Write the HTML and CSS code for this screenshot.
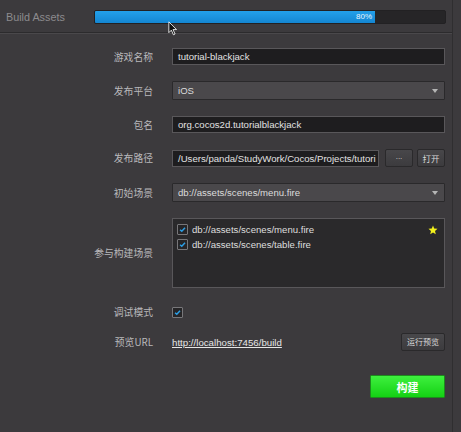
FILE: index.html
```html
<!DOCTYPE html>
<html>
<head>
<meta charset="utf-8">
<link rel="stylesheet" href="styles.css">
</head>
<body>
<div class="window">
  <div class="topbar">
    <div class="title">Build Assets</div>
    <div class="progress">
      <div class="fill" style="width:80%"><span class="pct">80%</span></div>
    </div>
  </div>
  <div class="form">
    <div class="label">游戏名称</div>
    <div class="field"><div class="input">tutorial-blackjack</div></div>

    <div class="label">发布平台</div>
    <div class="field"><div class="select">iOS<span class="arrow"></span></div></div>

    <div class="label">包名</div>
    <div class="field"><div class="input">org.cocos2d.tutorialblackjack</div></div>

    <div class="label">发布路径</div>
    <div class="field path">
      <div class="input grow">/Users/panda/StudyWork/Cocos/Projects/tutori</div>
      <div class="btn small dots">...</div>
      <div class="btn small">打开</div>
    </div>

    <div class="label">初始场景</div>
    <div class="field"><div class="select">db://assets/scenes/menu.fire<span class="arrow"></span></div></div>

    <div class="label">参与构建场景</div>
    <div class="field">
      <div class="scenes">
        <div class="scene"><span class="cb"><svg viewBox="0 0 10 10"><path d="M2.3 5.2 L4.2 7 L7.8 3" fill="none" stroke="#2c9fe6" stroke-width="1.6"/></svg></span><span class="sname">db://assets/scenes/menu.fire</span>
          <svg class="star" viewBox="0 0 10 10"><path d="M5 0.5 L6.2 3.6 L9.5 3.8 L7 5.9 L7.8 9.2 L5 7.4 L2.2 9.2 L3 5.9 L0.5 3.8 L3.8 3.6 Z" fill="#f2f01c"/></svg>
        </div>
        <div class="scene"><span class="cb"><svg viewBox="0 0 10 10"><path d="M2.3 5.2 L4.2 7 L7.8 3" fill="none" stroke="#2c9fe6" stroke-width="1.6"/></svg></span><span class="sname">db://assets/scenes/table.fire</span></div>
      </div>
    </div>

    <div class="label debug">调试模式</div>
    <div class="field debug"><span class="cb"><svg viewBox="0 0 10 10"><path d="M2.3 5.2 L4.2 7 L7.8 3" fill="none" stroke="#2c9fe6" stroke-width="1.6"/></svg></span></div>

    <div class="label url">预览URL</div>
    <div class="field url">
      <span class="link">http://localhost:7456/build</span>
      <div class="btn run">运行预览</div>
    </div>

    <div class="label"></div>
    <div class="field buildrow"><div class="build">构建</div></div>
  </div>
  <svg class="cursor" viewBox="0 0 12 18"><path d="M1 1 L1 14 L4 11 L6.5 16.5 L8.5 15.6 L6 10.3 L10.2 10.3 Z" fill="#111" stroke="#fff" stroke-width="1"/></svg>
</div>
</body>
</html>
```

FILE: styles.css
```css
html, body {
  margin: 0;
  padding: 0;
  background: #3c3a3d;
}
body {
  font-family: "Liberation Sans", "Noto Sans CJK SC", Arial, sans-serif;
  color: #d8d8d8;
  width: 461px;
  height: 432px;
  overflow: hidden;
}
.window {
  position: relative;
  width: 452px;
  height: 432px;
  border-right: 1px solid #2f2e30;
}
.topbar {
  height: 33px;
  display: flex;
  align-items: center;
  border-bottom: 1px solid #2c2b2d;
  box-shadow: 0 1px 0 #4a484b;
  box-sizing: border-box;
  padding-top: 1px;
}
.title {
  width: 88px;
  padding-left: 6px;
  font-size: 10.8px;
  color: #8c8b8e;
}
.progress {
  width: 350px;
  height: 12px;
  background: #262527;
  border: 1px solid #222123;
  border-radius: 2px;
  overflow: hidden;
}
.fill {
  height: 100%;
  background: linear-gradient(#23a0ea, #1486d2);
  display: flex;
  justify-content: flex-end;
  align-items: center;
}
.pct {
  font-size: 8px;
  color: #e9f3fb;
  padding-right: 3px;
}
.form {
  display: grid;
  grid-template-columns: 153px 273px;
  column-gap: 19px;
  row-gap: 16px;
  padding-top: 15px;
  align-items: center;
}
.label {
  text-align: right;
  font-family: "Noto Sans CJK SC", "Liberation Sans", sans-serif;
  font-size: 9.8px;
  color: #b9b8bb;
}
.field {
  display: flex;
  align-items: center;
}
.input, .select {
  box-sizing: border-box;
  width: 100%;
  height: 17px;
  font-size: 9.6px;
  line-height: 15px;
  padding: 0 5px;
  white-space: nowrap;
  overflow: hidden;
}
.input {
  background: #1e1d1f;
  border: 1px solid #59575a;
  color: #e2e2e2;
}
.select {
  height: 19px;
  line-height: 17px;
  background: #4a484b;
  border: 1px solid #2a292b;
  color: #dcdcdc;
  position: relative;
  border-radius: 1px;
}
.arrow {
  position: absolute;
  right: 6px;
  top: 7px;
  width: 0;
  height: 0;
  border-left: 3px solid transparent;
  border-right: 3px solid transparent;
  border-top: 4px solid #b5b5b5;
}
.path {
  gap: 4px;
}
.path .grow {
  flex: 1;
  width: auto;
  margin-right: 2px;
}
.btn {
  box-sizing: border-box;
  height: 18px;
  background: linear-gradient(#48474a, #3c3b3e);
  border: 1px solid #2a292b;
  border-radius: 2px;
  color: #d8d8d8;
  font-family: "Noto Sans CJK SC", sans-serif;
  font-size: 8.5px;
  line-height: 1;
  display: flex;
  align-items: center;
  justify-content: center;
}
.btn.small {
  width: 28px;
}
.btn.dots {
  font-family: "Liberation Sans", sans-serif;
  font-size: 8px;
  padding-bottom: 3px;
}
.scenes {
  box-sizing: border-box;
  width: 100%;
  height: 70px;
  background: #2a292b;
  border: 1px solid #59575a;
  padding: 3px 4px;
}
.scene {
  display: flex;
  align-items: center;
  height: 15px;
  font-size: 9.6px;
  color: #dedede;
}
.sname {
  margin-left: 4px;
}
.cb {
  box-sizing: border-box;
  width: 11px;
  height: 11px;
  border: 1px solid #78777a;
  background: #262527;
  border-radius: 1px;
  display: inline-flex;
}
.cb svg {
  width: 9px;
  height: 9px;
}
.star {
  width: 10px;
  height: 10px;
  margin-left: auto;
  margin-right: 2px;
}
.debug {
  margin-top: 1px;
}
.url {
  margin-top: -2px;
}
.field.url {
  justify-content: space-between;
}
.link {
  font-size: 9.7px;
  color: #e6e6e6;
  text-decoration: underline;
}
.btn.run {
  width: 44px;
  font-size: 8px;
}
.buildrow {
  justify-content: flex-end;
  margin-top: 8px;
}
.build {
  width: 75px;
  height: 23px;
  box-sizing: border-box;
  background: linear-gradient(#3ef03e, #14d114);
  border: 1px solid #1d8c1d;
  border-radius: 1px;
  color: #ffffff;
  font-family: "Noto Sans CJK SC", sans-serif;
  font-weight: bold;
  font-size: 11px;
  display: flex;
  align-items: center;
  justify-content: center;
}
.cursor {
  position: absolute;
  left: 168px;
  top: 21px;
  width: 10px;
  height: 15px;
}
```
